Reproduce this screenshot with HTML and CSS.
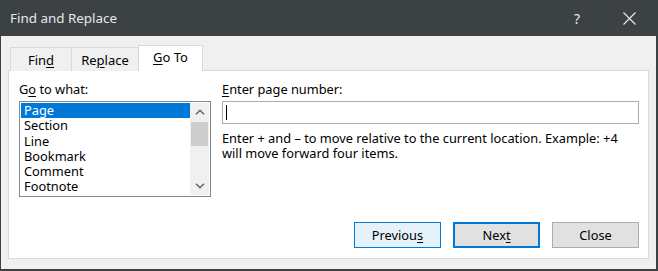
FILE: index.html
```html
<!DOCTYPE html>
<html lang="en">
<head>
<meta charset="utf-8">
<title>Find and Replace</title>
<link rel="stylesheet" href="styles.css">
</head>
<body>
<div class="window">
  <div class="titlebar">
    <span class="title">Find and Replace</span>
    <span class="help">?</span>
    <span class="close">
      <svg width="13" height="13" viewBox="0 0 13 13"><path d="M0.5 0.5L12.5 12.5M12.5 0.5L0.5 12.5" stroke="#e8e8e8" stroke-width="1.2" fill="none"/></svg>
    </span>
  </div>
  <div class="content">
    <div class="tabs">
      <div class="tab">Fin<u>d</u></div>
      <div class="tab">Re<u>p</u>lace</div>
      <div class="tab active"><u>G</u>o To</div>
    </div>
    <div class="panel">
      <div class="fields">
        <div class="col-left">
          <div class="label">G<u>o</u> to what:</div>
          <div class="listbox">
            <ul class="items">
              <li class="selected">Page</li>
              <li>Section</li>
              <li>Line</li>
              <li>Bookmark</li>
              <li>Comment</li>
              <li>Footnote</li>
            </ul>
            <div class="scrollbar">
              <div class="arrow">
                <svg width="10" height="6" viewBox="0 0 10 6"><path d="M1 5.2L5 1.2L9 5.2" stroke="#606060" stroke-width="1.4" fill="none"/></svg>
              </div>
              <div class="thumb"></div>
              <div class="track"></div>
              <div class="arrow">
                <svg width="10" height="6" viewBox="0 0 10 6"><path d="M1 0.8L5 4.8L9 0.8" stroke="#606060" stroke-width="1.4" fill="none"/></svg>
              </div>
            </div>
          </div>
        </div>
        <div class="col-right">
          <div class="label"><u>E</u>nter page number:</div>
          <div class="input"><span class="caret"></span></div>
          <p class="hint">Enter + and – to move relative to the current location. Example: +4 will move forward four items.</p>
        </div>
      </div>
      <div class="buttons">
        <div class="btn hover">Previou<u>s</u></div>
        <div class="btn default">Nex<u>t</u></div>
        <div class="btn">Close</div>
      </div>
    </div>
  </div>
</div>
</body>
</html>
```
FILE: styles.css
```css
* { box-sizing: border-box; }
html, body { margin: 0; padding: 0; }
body {
  width: 658px;
  height: 271px;
  font-family: "Noto Sans", "Open Sans", sans-serif;
  font-size: 12.8px;
  color: #000;
  background: #f0f0f0;
}
u { text-decoration: underline; text-underline-offset: 2px; text-decoration-thickness: 1px; }
.window {
  width: 658px;
  height: 271px;
  background: #f0f0f0;
  border: 1px solid #3c4144;
  border-top: none;
  border-right-width: 2px;
  border-bottom-width: 2px;
  display: flex;
  flex-direction: column;
}
.titlebar {
  height: 36px;
  background: #3c4144;
  display: flex;
  align-items: center;
  padding-left: 10px;
  color: #e8e8e8;
  margin: 0 -2px 0 -1px;
}
.title { font-size: 13.4px; flex: 1; }
.help { font-size: 14px; margin-right: 43px; }
.close { width: 13px; height: 13px; margin-right: 22px; display: flex; }
.content {
  flex: 1;
  display: flex;
  flex-direction: column;
  padding: 9px 7px 10px 7px;
}
.tabs {
  display: flex;
  align-items: flex-end;
  padding-left: 2px;
  height: 26px;
  position: relative;
  z-index: 1;
  margin-bottom: -1px;
}
.tab {
  height: 24px;
  padding: 0 4px;
  border: 1px solid #d9d9d9;
  border-bottom: none;
  border-right: none;
  background: #f0f0f0;
  display: flex;
  align-items: center;
  justify-content: center;
  font-size: 13px;
}
.tab:nth-child(1) { width: 61px; }
.tab:nth-child(2) { width: 67px; }
.tab.active {
  width: 65px;
  height: 26px;
  background: #fff;
  border-right: 1px solid #d9d9d9;
  padding-bottom: 3px;
}
.panel {
  flex: 1;
  background: #fff;
  border: 1px solid #d9d9d9;
  padding: 10px 9px 10px 10px;
  display: flex;
  flex-direction: column;
}
.fields {
  display: grid;
  grid-template-columns: 192px 1fr;
  column-gap: 11px;
}
.label { line-height: 17px; height: 20px; }
.listbox {
  width: 192px;
  height: 96px;
  border: 1px solid #828790;
  display: flex;
  padding: 1px 1px 1px 1px;
}
.items {
  list-style: none;
  margin: 0;
  padding: 0;
  flex: 1;
}
.items li {
  height: 15.3px;
  line-height: 15.3px;
  padding-left: 3px;
}
.items li.selected { background: #0078d7; color: #fff; }
.scrollbar {
  width: 19px;
  display: flex;
  flex-direction: column;
  background: #f0f0f0;
}
.arrow {
  height: 18px;
  display: flex;
  align-items: center;
  justify-content: center;
}
.thumb {
  height: 24px;
  margin: 1px 1px;
  background: #cdcdcd;
}
.track { flex: 1; }
.input {
  height: 23px;
  border: 1px solid #adadad;
  display: flex;
  align-items: center;
  padding-left: 3px;
}
.caret { width: 1px; height: 15px; background: #000; }
.hint {
  margin: 7px 0 0 0;
  line-height: 15px;
}
.buttons {
  margin-top: auto;
  display: flex;
  justify-content: flex-end;
  gap: 12px;
}
.btn {
  width: 87px;
  height: 26px;
  border: 1px solid #adadad;
  background: #e1e1e1;
  display: flex;
  align-items: center;
  justify-content: center;
}
.btn.hover { background: #e5f1fb; border-color: #0078d7; }
.btn.default { border: 2px solid #0078d7; }
```
